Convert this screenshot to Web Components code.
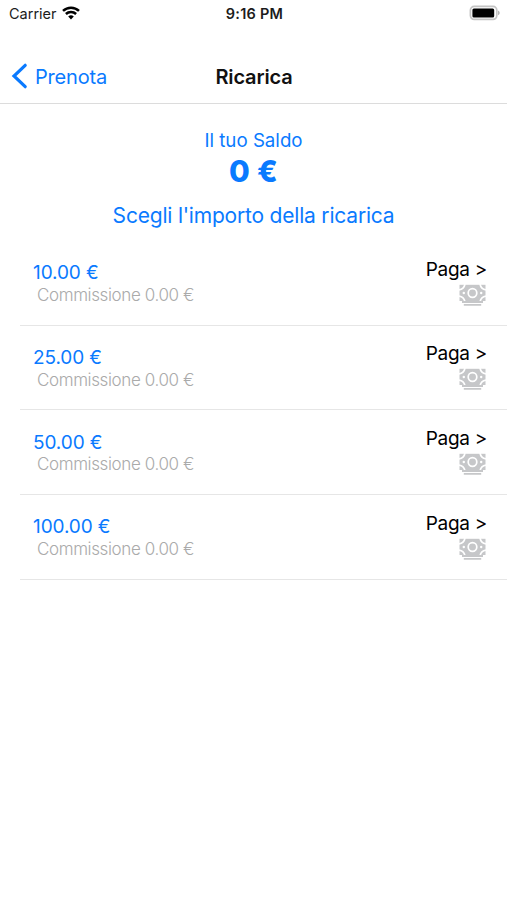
<!DOCTYPE html>
<html lang="it">
<head>
<meta charset="UTF-8">
<title>Ricarica</title>
<style>
  body {
    margin: 0;
    background: #fff;
    color: #111;
    font-family: Inter, "Liberation Sans", sans-serif;
  }
</style>
</head>
<body>
<recharge-screen></recharge-screen>

<script>
const STATUS_TEMPLATE = /*HTML*/ `
  <style>
    :host {
      display: grid;
      grid-template-columns: 1fr auto 1fr;
      align-items: center;
      box-sizing: border-box;
      height: 28px;
      padding: 0 7px 0 9px;
      color: #1c1c1c;
      font-size: 14.5px;
      line-height: 28px;
    }

    .carrier {
      display: flex;
      align-items: center;
      gap: 5px;
    }

    .time {
      font-size: 14.5px;
      font-weight: 600;
      letter-spacing: 0.25px;
    }

    .battery {
      justify-self: end;
    }

    svg {
      display: block;
      margin-top: -2px;
    }
  </style>

  <div class="carrier">
    <span><slot name="carrier"></slot></span>
    <svg width="18" height="14" viewBox="0 0 18 14" fill="none" stroke="#000" stroke-width="2.5">
      <path d="M1 4.9a11.6 11.6 0 0 1 16 0"/>
      <path d="M3.9 8a7.3 7.3 0 0 1 10.2 0"/>
      <path d="M9 13.4 6.2 10.5a4 4 0 0 1 5.6 0z" fill="#000" stroke="none"/>
    </svg>
  </div>
  <span class="time"><slot name="time"></slot></span>
  <svg class="battery" width="31" height="16" viewBox="0 0 31 16">
    <rect x="1.4" y="1.4" width="26.4" height="13" rx="3.8" fill="#fff" stroke="#c4c4c4" stroke-width="1.7"/>
    <rect x="3.4" y="3.4" width="21.8" height="9" rx="1.5" fill="#000"/>
    <path d="M29.1 5.6c2 1 2 3.6 0 4.6z" fill="#aaa"/>
  </svg>
`

const NAV_TEMPLATE = /*HTML*/ `
  <style>
    :host {
      display: grid;
      grid-template-columns: 1fr auto 1fr;
      align-items: center;
      box-sizing: border-box;
      height: 76px;
      padding: 22px 11px 0 11px;
      border-bottom: 1px solid #dcdcdc;
      font-size: 20px;
    }

    .back {
      display: flex;
      align-items: center;
      gap: 7px;
      color: #0a7aff;
      letter-spacing: -0.2px;
    }

    .title {
      padding-left: 1px;
      font-weight: 600;
      letter-spacing: -0.15px;
    }

    svg {
      display: block;
      margin-top: -1px;
    }
  </style>

  <div class="back">
    <svg width="17" height="26" viewBox="0 0 17 26" fill="none" stroke="currentColor" stroke-width="3.2" stroke-linecap="round">
      <path d="M14.2 2.3 3 13l11.2 10.7"/>
    </svg>
    <span class="label"><slot name="back"></slot></span>
  </div>
  <span class="title"><slot></slot></span>
`

const BALANCE_TEMPLATE = /*HTML*/ `
  <style>
    :host {
      display: flex;
      flex-direction: column;
      align-items: center;
      box-sizing: border-box;
      height: 137px;
      padding-top: 25px;
      color: #0a7aff;
    }

    .label {
      font-size: 18.7px;
      line-height: 24px;
    }

    .amount {
      margin-top: -1px;
      font-size: 30px;
      font-weight: 800;
      line-height: 38px;
      letter-spacing: 0.3px;
    }

    .prompt {
      margin-top: 12px;
      font-size: 21px;
      line-height: 28px;
      letter-spacing: -0.2px;
    }
  </style>

  <span class="label"><slot name="label"></slot></span>
  <span class="amount"><slot name="amount"></slot></span>
  <span class="prompt"><slot></slot></span>
`

const ROW_TEMPLATE = /*HTML*/ `
  <style>
    :host {
      display: flex;
      justify-content: space-between;
      box-sizing: border-box;
      height: 84.7px;
      margin-left: 20px;
      padding: 16.5px 20px 0 13px;
      border-bottom: 1px solid #e6e6e6;
    }

    .info {
      padding-top: 3.9px;
    }

    .amount {
      color: #0a7aff;
      font-size: 19px;
      line-height: 24px;
      letter-spacing: -0.1px;
    }

    .fee {
      margin-top: -0.4px;
      padding-left: 4px;
      color: #aaa;
      font-size: 17px;
      font-weight: 300;
      line-height: 20px;
      letter-spacing: -0.38px;
    }

    .action {
      display: flex;
      flex-direction: column;
      align-items: flex-end;
      color: #000;
      font-size: 19px;
      line-height: 24px;
      letter-spacing: -0.3px;
    }

    svg {
      display: block;
      margin: 2px 1px 0 0;
    }
  </style>

  <div class="info">
    <div class="amount"><slot></slot></div>
    <div class="fee">Commissione <slot name="fee"></slot></div>
  </div>
  <div class="action">
    <span>Paga &gt;</span>
    <svg width="27" height="23" viewBox="0 0 27 23">
      <rect x="0.5" y="0.8" width="26" height="16.2" fill="#c6c7c9"/>
      <path d="M0 5.8Q5 5.2 6 0M21 0q1 5.2 6 5.8M0 12.2q5 .6 6 5.8M21 18q1-5.2 6-5.8" fill="none" stroke="#fff" stroke-width="1.7"/>
      <circle cx="13.5" cy="9" r="4.3" fill="none" stroke="#fff" stroke-width="1.7"/>
      <circle cx="4.8" cy="9" r="1.2" fill="#fff"/>
      <circle cx="22.2" cy="9" r="1.2" fill="#fff"/>
      <path d="M3 17h21v2H3zM4.8 20h17.4v1.8H4.8z" fill="#c6c7c9"/>
    </svg>
  </div>
`

const SCREEN_TEMPLATE = /*HTML*/ `
  <style>
    :host {
      display: block;
      width: 507px;
      height: 900px;
      overflow: hidden;
      background: #fff;
    }
  </style>

  <status-bar>
    <span slot="carrier">Carrier</span>
    <span slot="time">9:16 PM</span>
  </status-bar>
  <nav-bar><span slot="back">Prenota</span>Ricarica</nav-bar>
  <balance-header>
    <span slot="label">Il tuo Saldo</span>
    <span slot="amount">0 €</span>
    Scegli l'importo della ricarica
  </balance-header>
  <recharge-row>10.00 €<span slot="fee">0.00 €</span></recharge-row>
  <recharge-row>25.00 €<span slot="fee">0.00 €</span></recharge-row>
  <recharge-row>50.00 €<span slot="fee">0.00 €</span></recharge-row>
  <recharge-row>100.00 €<span slot="fee">0.00 €</span></recharge-row>
`

class TemplateElement extends HTMLElement {
  constructor(html) {
    super()
    this.attachShadow({ mode: 'open' })

    const template = document.createElement('template')
    template.innerHTML = html
    this.shadowRoot.appendChild(template.content.cloneNode(true))
  }
}

class StatusBar extends TemplateElement {
  constructor() {
    super(STATUS_TEMPLATE)
  }
}

class NavBar extends TemplateElement {
  constructor() {
    super(NAV_TEMPLATE)
  }
}

class BalanceHeader extends TemplateElement {
  constructor() {
    super(BALANCE_TEMPLATE)
  }
}

class RechargeRow extends TemplateElement {
  constructor() {
    super(ROW_TEMPLATE)
  }
}

class RechargeScreen extends TemplateElement {
  constructor() {
    super(SCREEN_TEMPLATE)
  }
}

customElements.define('status-bar', StatusBar)
customElements.define('nav-bar', NavBar)
customElements.define('balance-header', BalanceHeader)
customElements.define('recharge-row', RechargeRow)
customElements.define('recharge-screen', RechargeScreen)
</script>
</body>
</html>
